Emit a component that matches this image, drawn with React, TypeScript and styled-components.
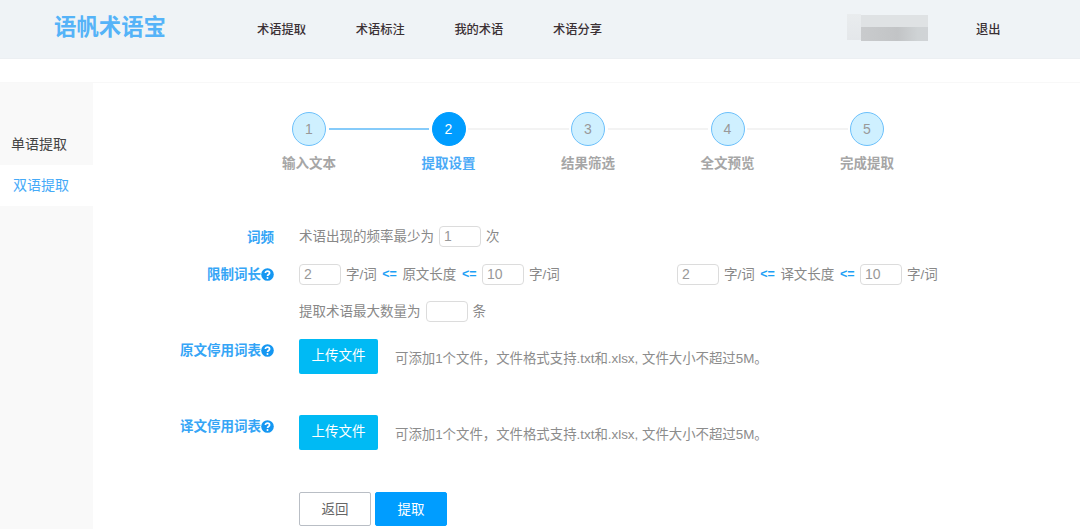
import React from "react";
import styled, { createGlobalStyle } from "styled-components";

const Global = createGlobalStyle`
  html, body { margin: 0; padding: 0; background: #fff; overflow: hidden; }
  body { font-family: "Liberation Sans", "Noto Sans CJK SC", sans-serif; font-size: 13.5px; color: #888; }
  * { box-sizing: border-box; }
`;

const Page = styled.div`
  width: 1080px;
  height: 529px;
  overflow: hidden;
  display: flex;
  flex-direction: column;
`;

const Header = styled.header`
  height: 59px;
  flex: none;
  background: #eff3f6;
  border-bottom: 1px solid #eceff2;
  display: flex;
  align-items: center;
  padding-left: 54px;
`;

const Logo = styled.div`
  width: 203px;
  font-size: 22.4px;
  font-weight: 700;
  color: #55b3f8;
  line-height: 1;
  margin-top: -1px;
`;

const NavLink = styled.a<{ $last?: boolean }>`
  width: ${(p) => (p.$last ? "49px" : "98.7px")};
  font-size: 12.25px;
  font-weight: 500;
  color: #3a3034;
  white-space: nowrap;
`;

const Masked = styled.div`
  width: 81px;
  height: 27px;
  margin-left: 245px;
  margin-top: -3px;
  filter: blur(0.7px);
  background:
    linear-gradient(90deg, #c9cbcd 0, #c2c4c6 55%, #cfd3d5 85%, #d0d3d6 100%) 14px 13px / 67px 14px no-repeat,
    linear-gradient(90deg, #dfe2e4 0, #dfe2e4 100%) 14px 1px / 67px 12px no-repeat,
    linear-gradient(#e9ecee, #e4e7ea) 0 0 / 14px 26px no-repeat;
`;

const Logout = styled.a`
  margin-left: 48px;
  font-size: 12.25px;
  font-weight: 500;
  color: #3a3034;
`;

const Gap = styled.div`
  height: 24px;
  flex: none;
  border-bottom: 1px solid #f8f8f8;
`;

const Body = styled.div`
  flex: 1;
  display: flex;
  min-height: 0;
`;

const Sidebar = styled.aside`
  width: 93px;
  flex: none;
  background: #f9f9f9;
  padding-top: 42px;
  display: flex;
  flex-direction: column;
`;

const SideItem = styled.div<{ $active?: boolean }>`
  height: ${(p) => (p.$active ? "41px" : "40px")};
  line-height: ${(p) => (p.$active ? "40px" : "38px")};
  padding-left: ${(p) => (p.$active ? "13px" : "11px")};
  background: ${(p) => (p.$active ? "#fff" : "transparent")};
  color: ${(p) => (p.$active ? "#45aaf8" : "#444")};
  font-size: 14px;
`;

const Main = styled.main`
  flex: 1;
  padding-top: 29px;
`;

const Steps = styled.div`
  margin-left: 199px;
  display: flex;
  align-items: center;
`;

const Circle = styled.div<{ $active?: boolean }>`
  width: 34px;
  height: 34px;
  flex: none;
  border-radius: 50%;
  border: 1px solid ${(p) => (p.$active ? "#009dff" : "#6cc0fb")};
  background: ${(p) => (p.$active ? "#009dff" : "#cff0ff")};
  color: ${(p) => (p.$active ? "#fff" : "#999")};
  font-size: 14px;
  display: flex;
  align-items: center;
  justify-content: center;
`;

const Connector = styled.div<{ $done?: boolean }>`
  width: 100.5px;
  height: 2px;
  margin: 0 2.5px;
  flex: none;
  background: ${(p) => (p.$done ? "#86cbfa" : "#f3f3f3")};
`;

const StepLabels = styled.div`
  margin-left: 146.25px;
  margin-top: 8px;
  display: flex;
`;

const StepLabel = styled.div<{ $active?: boolean }>`
  width: 139.5px;
  text-align: center;
  font-size: 13.5px;
  line-height: 20px;
  font-weight: 700;
  color: ${(p) => (p.$active ? "#4aaaf7" : "#a6a6a6")};
`;

const Form = styled.div`
  margin-top: 52px;
  display: grid;
  grid-template-columns: 181px 1fr;
  column-gap: 25px;
`;

const Label = styled.div<{ $h: number; $top?: number }>`
  height: ${(p) => p.$h}px;
  padding-top: ${(p) => p.$top ?? 0}px;
  display: flex;
  justify-content: flex-end;
  align-items: flex-start;
  font-size: 13.5px;
  line-height: 20px;
  font-weight: 700;
  color: #35a5f6;
`;

const Help = styled.svg`
  width: 13px;
  height: 13px;
  margin-top: 3px;
  flex: none;
`;

const Line = styled.div<{ $h: number }>`
  height: ${(p) => p.$h}px;
  display: flex;
  align-items: flex-start;
  line-height: 21px;
  white-space: nowrap;
`;

const Group = styled.div<{ $w?: number }>`
  display: flex;
  align-items: center;
  gap: 5px;
  ${(p) => (p.$w ? `width: ${p.$w}px;` : "")}
`;

const NumBox = styled.div`
  width: 42px;
  height: 21px;
  border: 1px solid #dcdcdc;
  border-radius: 4px;
  background: #fff;
  padding-left: 4px;
  line-height: 19px;
  font-size: 14px;
  color: #999;
`;

const Arrow = styled.b`
  color: #1d9ff5;
  font-size: 12.5px;
  font-weight: 700;
  margin: 0 0.5px;
`;

const Upload = styled.button`
  width: 79px;
  height: 35px;
  border: 0;
  border-radius: 2px;
  background: #00baf4;
  color: #fff;
  font: inherit;
  font-size: 13.5px;
  padding: 0 0 2px;
`;

const Hint = styled.span`
  margin-left: 17px;
  line-height: 40px;
  color: #8c8c8c;
  font-size: 13.4px;
`;

const Actions = styled.div`
  display: flex;
  gap: 4px;
`;

const Btn = styled.button<{ $primary?: boolean }>`
  width: 72px;
  height: 34px;
  border-radius: 2px;
  border: 1px solid ${(p) => (p.$primary ? "#009dff" : "#b9bec5")};
  background: ${(p) => (p.$primary ? "#009dff" : "#fff")};
  color: ${(p) => (p.$primary ? "#fff" : "#666")};
  font: inherit;
  font-size: 13.5px;
  padding: 0 0 2px;
`;

const HelpIcon = () => (
  <Help viewBox="0 0 13 13">
    <circle cx="6.5" cy="6.5" r="6.3" fill="#1497f2" />
    <path d="M4.4 5.1c0-1.2 1-1.9 2.1-1.9s2.1.6 2.1 1.8c0 1.5-2.1 1.4-2.1 2.9" fill="none" stroke="#fff" strokeWidth="1.7" />
    <circle cx="6.5" cy="10.1" r="1" fill="#fff" />
  </Help>
);

const steps = ["输入文本", "提取设置", "结果筛选", "全文预览", "完成提取"];

export default function App() {
  return (
    <Page>
      <Global />
      <Header>
        <Logo>语帆术语宝</Logo>
        <NavLink>术语提取</NavLink>
        <NavLink>术语标注</NavLink>
        <NavLink>我的术语</NavLink>
        <NavLink $last>术语分享</NavLink>
        <Masked />
        <Logout>退出</Logout>
      </Header>
      <Gap />
      <Body>
        <Sidebar>
          <SideItem>单语提取</SideItem>
          <SideItem $active>双语提取</SideItem>
        </Sidebar>
        <Main>
          <Steps>
            {steps.map((_, i) => (
              <React.Fragment key={i}>
                <Circle $active={i === 1}>{i + 1}</Circle>
                {i < 4 && <Connector $done={i === 0} />}
              </React.Fragment>
            ))}
          </Steps>
          <StepLabels>
            {steps.map((s, i) => (
              <StepLabel key={s} $active={i === 1}>{s}</StepLabel>
            ))}
          </StepLabels>
          <Form>
            <Label $h={38} $top={2}>词频</Label>
            <Line $h={38}>
              <Group>
                术语出现的频率最少为<NumBox>1</NumBox>次
              </Group>
            </Line>
            <Label $h={37} $top={1}>限制词长<HelpIcon /></Label>
            <Line $h={37}>
              <Group $w={378}>
                <NumBox>2</NumBox>字/词<Arrow>&lt;=</Arrow>原文长度<Arrow>&lt;=</Arrow><NumBox>10</NumBox>字/词
              </Group>
              <Group>
                <NumBox>2</NumBox>字/词<Arrow>&lt;=</Arrow>译文长度<Arrow>&lt;=</Arrow><NumBox>10</NumBox>字/词
              </Group>
            </Line>
            <Label $h={38} />
            <Line $h={38}>
              <Group>
                提取术语最大数量为<NumBox />条
              </Group>
            </Line>
            <Label $h={76} $top={2}>原文停用词表<HelpIcon /></Label>
            <Line $h={76}>
              <Upload>上传文件</Upload>
              <Hint>可添加1个文件，文件格式支持.txt和.xlsx, 文件大小不超过5M。</Hint>
            </Line>
            <Label $h={77} $top={2}>译文停用词表<HelpIcon /></Label>
            <Line $h={77}>
              <Upload>上传文件</Upload>
              <Hint>可添加1个文件，文件格式支持.txt和.xlsx, 文件大小不超过5M。</Hint>
            </Line>
            <div />
            <Actions>
              <Btn>返回</Btn>
              <Btn $primary>提取</Btn>
            </Actions>
          </Form>
        </Main>
      </Body>
    </Page>
  );
}
